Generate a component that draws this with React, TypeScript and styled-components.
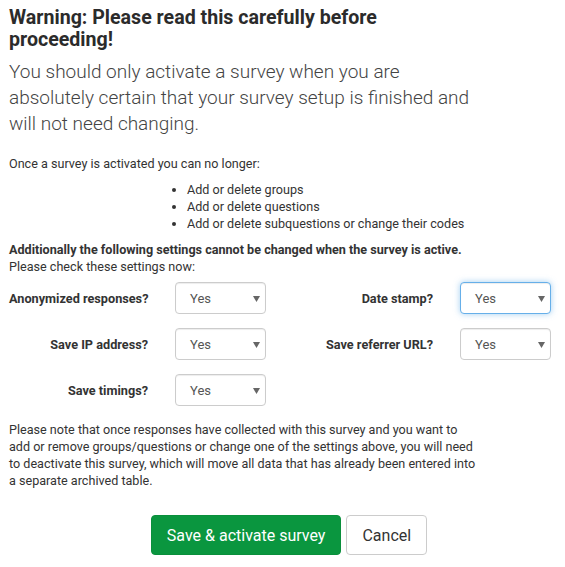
import { FC } from "react";
import styled, { createGlobalStyle } from "styled-components";

const GlobalStyle = createGlobalStyle`
  html, body {
    margin: 0;
    padding: 0;
    background: #ffffff;
  }
  body {
    font-family: Roboto, "Liberation Sans", Arial, sans-serif;
    color: #333333;
  }
`;

const Page = styled.div`
  padding: 7px 0 0 9px;
  width: 556px;
`;

const Heading = styled.h3`
  margin: 0;
  max-width: 470px;
  font-size: 19.6px;
  font-weight: 700;
  line-height: 22px;
  color: #2b2b2b;
`;

const Lead = styled.p`
  margin: 8px 0 0 0;
  max-width: 470px;
  font-size: 19px;
  font-weight: 300;
  line-height: 26px;
  color: #444444;
`;

const Small = styled.p<{ $bold?: boolean; $gap?: number }>`
  margin: ${(p) => p.$gap ?? 0}px 0 0 0;
  max-width: 476px;
  font-size: 12.6px;
  line-height: 17px;
  font-weight: ${(p) => (p.$bold ? 700 : 400)};
`;

const List = styled.ul`
  margin: 9px 0 0 0;
  padding: 0 0 0 178px;
  font-size: 12.6px;
  line-height: 17px;
  list-style: disc;
`;

const Form = styled.div`
  display: grid;
  grid-template-columns: 285px 262px;
  row-gap: 14px;
  margin-top: 7px;
`;

const Field = styled.div`
  display: grid;
  grid-template-columns: 139px 91px;
  column-gap: 27px;
  align-items: center;
`;

const Label = styled.label`
  text-align: right;
  white-space: nowrap;
  font-size: 12.7px;
  font-weight: 700;
  color: #333333;
`;

const SelectBox = styled.div<{ $focus?: boolean }>`
  position: relative;
  height: 32px;
  box-sizing: border-box;
  border: 1px solid ${(p) => (p.$focus ? "#66afe9" : "#cccccc")};
  border-radius: 4px;
  box-shadow: ${(p) =>
    p.$focus
      ? "inset 0 1px 1px rgba(0,0,0,.075), 0 0 6px rgba(102,175,233,.6)"
      : "inset 0 1px 1px rgba(0,0,0,.075)"};
  background: #ffffff;
  display: flex;
  align-items: center;
  padding-left: 14px;
  font-size: 13px;
  color: #555555;
`;

const Arrow = styled.svg`
  position: absolute;
  right: 5px;
  top: 13px;
`;

const Note = styled(Small)`
  margin-top: 15px;
  max-width: 467px;
`;

const Buttons = styled.div`
  display: flex;
  justify-content: center;
  gap: 5px;
  margin-top: 26px;
  padding-left: 4px;
`;

const Button = styled.button<{ $primary?: boolean }>`
  height: 40px;
  box-sizing: border-box;
  padding: 0 15px;
  border-radius: 4px;
  font-family: Roboto, "Liberation Sans", Arial, sans-serif;
  font-size: 16px;
  cursor: pointer;
  border: 1px solid ${(p) => (p.$primary ? "#0a8f3c" : "#cccccc")};
  background: ${(p) => (p.$primary ? "#0a963f" : "#ffffff")};
  color: ${(p) => (p.$primary ? "#ffffff" : "#333333")};
`;

type SelectProps = { value: string; focus?: boolean };

const FakeSelect: FC<SelectProps> = ({ value, focus }) => (
  <SelectBox $focus={focus}>
    {value}
    <Arrow width="7" height="6" viewBox="0 0 7 6">
      <path d="M0 0 L7 0 L3.5 6 Z" fill="#666666" />
    </Arrow>
  </SelectBox>
);

const fields = [
  { label: "Anonymized responses?" },
  { label: "Date stamp?", focus: true },
  { label: "Save IP address?" },
  { label: "Save referrer URL?" },
  { label: "Save timings?" },
];

export default function App() {
  return (
    <Page>
      <GlobalStyle />
      <Heading>Warning: Please read this carefully before proceeding!</Heading>
      <Lead>
        You should only activate a survey when you are absolutely certain that
        your survey setup is finished and will not need changing.
      </Lead>

      <Small $gap={18}>Once a survey is activated you can no longer:</Small>
      <List>
        <li>Add or delete groups</li>
        <li>Add or delete questions</li>
        <li>Add or delete subquestions or change their codes</li>
      </List>

      <Small $bold $gap={9}>
        Additionally the following settings cannot be changed when the survey
        is active.
      </Small>
      <Small>Please check these settings now:</Small>

      <Form>
        {fields.map((f) => (
          <Field key={f.label}>
            <Label>{f.label}</Label>
            <FakeSelect value="Yes" focus={f.focus} />
          </Field>
        ))}
      </Form>

      <Note>
        Please note that once responses have collected with this survey and you
        want to add or remove groups/questions or change one of the settings
        above, you will need to deactivate this survey, which will move all data
        that has already been entered into a separate archived table.
      </Note>

      <Buttons>
        <Button $primary>Save &amp; activate survey</Button>
        <Button>Cancel</Button>
      </Buttons>
    </Page>
  );
}
